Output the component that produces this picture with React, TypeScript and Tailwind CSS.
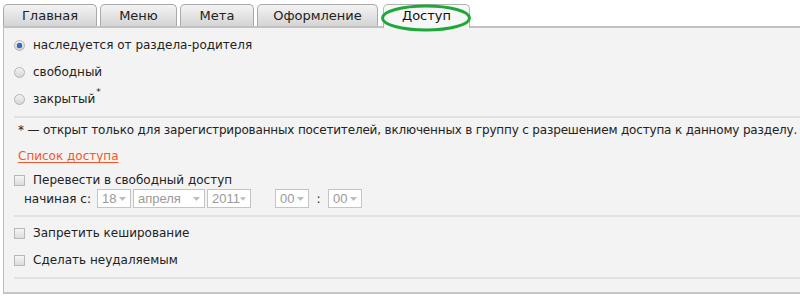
import React from "react";

const tabs = ["Главная", "Меню", "Мета", "Оформление"];
const tabWidths = ["w-[94px]", "w-[77px]", "w-[74px]", "w-[121px]"];

function Radio({ checked }: { checked?: boolean }) {
  return (
    <span className="w-[11px] h-[11px] rounded-full border border-[#b5b5b5] bg-gradient-to-b from-[#f4f4f4] to-[#d6d6d6] flex items-center justify-center shrink-0">
      {checked && <span className="w-[5px] h-[5px] rounded-full bg-[#2d6fc2] shadow-[0_0_1px_#0a3f8a]" />}
    </span>
  );
}

function Check() {
  return <span className="w-[11px] h-[11px] border border-[#b8b8b8] bg-gradient-to-b from-[#f6f6f6] to-[#dcdcdc] shrink-0" />;
}

function Select({ value, w }: { value: string; w: string }) {
  return (
    <span
      className={`${w} h-[19px] border border-[#c4c4c4] bg-white flex items-center justify-between pl-[4px] pr-[4px] text-[#9a9a9a] text-[13px]`}
      style={{ fontFamily: '"Liberation Sans", Arial, sans-serif' }}
    >
      {value}
      <svg width="7" height="4" viewBox="0 0 7 4"><path d="M0 0h7L3.5 4z" fill="#bcbcbc" /></svg>
    </span>
  );
}

export default function App() {
  return (
    <div className="w-[800px] h-[300px] bg-white overflow-hidden text-[12px] text-[#222]" style={{ fontFamily: '"DejaVu Sans", Verdana, sans-serif' }}>
      {/* Tabs */}
      <div className="flex items-end gap-[3px] pl-[3px] h-[26px]">
        {tabs.map((t, i) => (
          <div
            key={t}
            className={`${tabWidths[i]} h-[22px] border border-b-0 border-[#a9a9a9] rounded-t-[5px] bg-gradient-to-b from-[#f4f4f4] to-[#d4d4d4] flex items-center justify-center text-[13px] text-[#222]`}
          >
            {t}
          </div>
        ))}
        <div className="relative ml-[2px] w-[87px] h-[24px] border border-b-0 border-[#b4b4b4] rounded-t-[5px] bg-[#f7f7f7] flex items-center justify-center text-[13px] text-[#111] z-10 -mb-[2px] pb-[2px]">
          Доступ
          <svg className="absolute left-[-4px] top-[-1px]" width="92" height="28" viewBox="0 0 92 28">
            <ellipse cx="46" cy="14" rx="43.5" ry="12" fill="none" stroke="#1fa83a" strokeWidth="3" />
          </svg>
        </div>
      </div>

      {/* Panel */}
      <div className="ml-[3px] border-t-2 border-l border-b-2 border-t-[#c2c2c2] border-l-[#bdbdbd] border-b-[#c6c6c6] bg-[#f3f3f3] h-[268px] pl-[10px]">
        <div className="pt-[9px] flex flex-col">
          <label className="flex items-center gap-[8px] h-[16px]"><Radio checked />наследуется от раздела-родителя</label>
          <label className="flex items-center gap-[8px] h-[16px] mt-[11px]"><Radio />свободный</label>
          <label className="flex items-center gap-[8px] h-[16px] mt-[11px]"><Radio />закрытый<sup className="-ml-[7px] text-[9px] -mt-[6px]">*</sup></label>
        </div>
        <div className="border-t-2 border-[#e1e1e1] mt-[9px]" />
        <div className="pl-[4px] pt-[3px] whitespace-nowrap tracking-[-0.17px]">* — открыт только для зарегистрированных посетителей, включенных в группу с разрешением доступа к данному разделу.</div>
        <div className="pl-[4px] mt-[8px]"><a className="text-[#f0592b] underline underline-offset-2">Список доступа</a></div>
        <div className="pt-[7px]">
          <label className="flex items-center gap-[8px] h-[16px]"><Check />Перевести в свободный доступ</label>
          <div className="flex items-center gap-[2px] mt-[1px] pl-[10px]">
            <span className="mr-[4px]">начиная с:</span>
            <Select value="18" w="w-[34px]" />
            <Select value="апреля" w="w-[72px]" />
            <Select value="2011" w="w-[44px]" />
            <span className="w-[20px]" />
            <Select value="00" w="w-[34px]" />
            <span className="w-[15px] text-center">:</span>
            <Select value="00" w="w-[34px]" />
          </div>
        </div>
        <div className="border-t-2 border-[#e1e1e1] mt-[7px]" />
        <div className="pt-[8px] flex flex-col">
          <label className="flex items-center gap-[8px] h-[16px]"><Check />Запретить кеширование</label>
          <label className="flex items-center gap-[8px] h-[16px] mt-[11px]"><Check />Сделать неудаляемым</label>
        </div>
        <div className="border-t-2 border-[#e1e1e1] mt-[9px]" />
      </div>
    </div>
  );
}
